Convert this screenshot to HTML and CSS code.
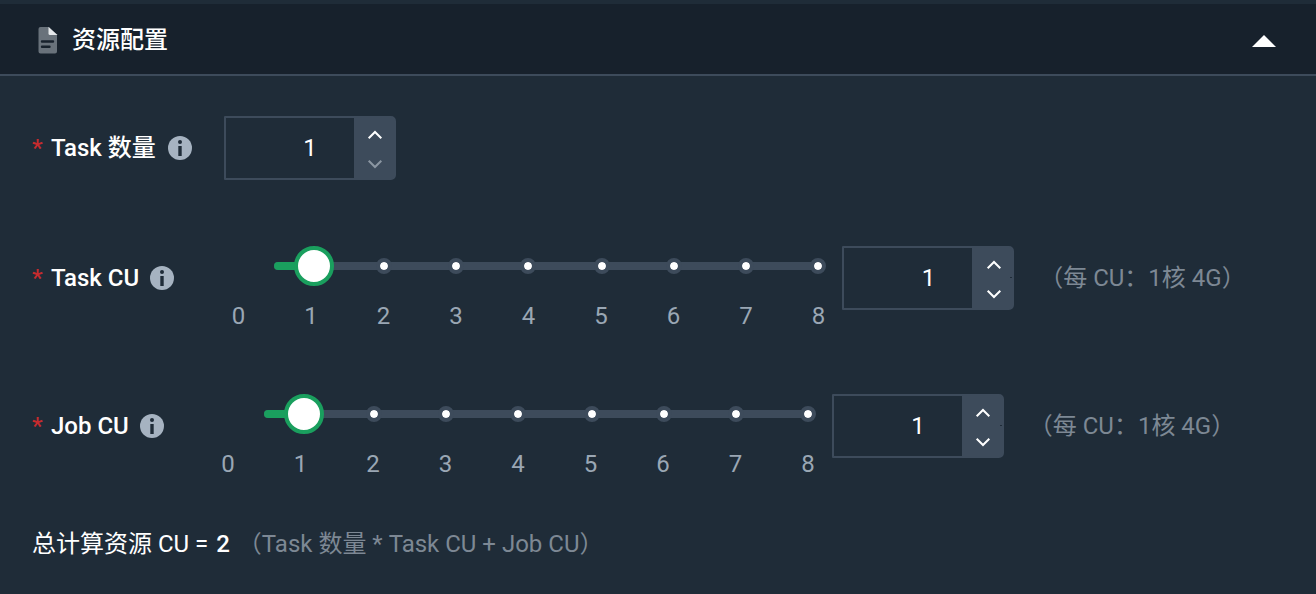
FILE: index.html
```html
<!DOCTYPE html>
<html lang="zh-CN">
<head>
<meta charset="utf-8">
<title>资源配置</title>
<link rel="stylesheet" href="styles.css">
</head>
<body>
<svg class="defs" width="0" height="0">
  <symbol id="info" viewBox="0 0 24 24"><circle cx="12" cy="12" r="12" fill="#a6b3c1"/><circle cx="12" cy="6" r="2" fill="#1f2c38"/><path d="M10.3 10h3.4v10h-3.4z" fill="#1f2c38"/></symbol>
  <symbol id="up" viewBox="0 0 16 10"><path d="M1.7 8.3 8 2l6.300 6.300" fill="none" stroke="currentColor" stroke-width="2"/></symbol>
  <symbol id="down" viewBox="0 0 16 10"><path d="M1.700 1.700 8 8l6.300-6.300" fill="none" stroke="currentColor" stroke-width="2"/></symbol>
</svg>
<header class="header">
  <svg class="doc" viewBox="0 0 20 28"><path d="M2.500 1H11l8 8v16.500a2 2 0 0 1-2 2H2.500a2 2 0 0 1-2-2V3a2 2 0 0 1 2-2z" fill="#69727b"/><path d="M10.500 1v6.500A1.500 1.500 0 0 0 12 9h7.500z" fill="#e6e9ec"/><path d="M4 15.500h11M4 20.700h7.500" stroke="#17212c" stroke-width="2.400" stroke-linecap="round"/></svg>
  <h1 class="title">资源配置</h1>
  <svg class="caret" viewBox="0 0 24 12"><path d="M0 12 12 0l12 12z" fill="#fff"/></svg>
</header>
<main class="body">
  <section class="row row-count">
    <span class="star">*</span><span class="label">Task 数量</span><svg class="info"><use href="#info"/></svg>
    <div class="stepper"><span class="value">1</span><span class="buttons"><svg><use href="#up"/></svg><svg class="disabled"><use href="#down"/></svg></span></div>
  </section>
  <section class="row row-task">
    <span class="star">*</span><span class="label">Task CU</span><svg class="info"><use href="#info"/></svg>
    <div class="slider">
      <div class="track"><i class="fill"></i><i class="tick" style="left:110px"></i><i class="tick" style="left:182px"></i><i class="tick" style="left:254px"></i><i class="tick" style="left:328px"></i><i class="tick" style="left:400px"></i><i class="tick" style="left:472px"></i><i class="tick" style="left:544px"></i><i class="handle"></i></div>
      <div class="marks"><span>0</span><span>1</span><span>2</span><span>3</span><span>4</span><span>5</span><span>6</span><span>7</span><span>8</span></div>
    </div>
    <div class="stepper notched"><span class="value">1</span><span class="buttons"><svg><use href="#up"/></svg><svg><use href="#down"/></svg></span></div>
    <span class="hint">（每 CU：1核 4G）</span>
  </section>
  <section class="row row-job">
    <span class="star">*</span><span class="label">Job CU</span><svg class="info"><use href="#info"/></svg>
    <div class="slider">
      <div class="track"><i class="fill"></i><i class="tick" style="left:110px"></i><i class="tick" style="left:182px"></i><i class="tick" style="left:254px"></i><i class="tick" style="left:328px"></i><i class="tick" style="left:400px"></i><i class="tick" style="left:472px"></i><i class="tick" style="left:544px"></i><i class="handle"></i></div>
      <div class="marks"><span>0</span><span>1</span><span>2</span><span>3</span><span>4</span><span>5</span><span>6</span><span>7</span><span>8</span></div>
    </div>
    <div class="stepper notched"><span class="value">1</span><span class="buttons"><svg><use href="#up"/></svg><svg><use href="#down"/></svg></span></div>
    <span class="hint">（每 CU：1核 4G）</span>
  </section>
  <p class="total"><span>总计算资源 CU = <b>2</b></span><span class="formula">（Task 数量 * Task CU + Job CU）</span></p>
</main>
</body>
</html>
```
FILE: styles.css
```css
* { box-sizing: border-box; }
body {
  margin: 0;
  height: 594px;
  padding-top: 4px;
  overflow: hidden;
  background: #1f2c38;
  color: #fff;
  font: 400 24px/32px Roboto, "Noto Sans CJK SC", sans-serif;
  white-space: nowrap;
}
.defs { position: absolute; }
.header {
  display: flex;
  align-items: center;
  height: 72px;
  padding: 0 40px 0 38px;
  background: #17212c;
  border-bottom: 2px solid #3d4b5b;
}
.doc { width: 20px; height: 28px; margin-top: 1px; }
.title { margin: 2px auto 0 14px; font-size: 24px; font-weight: 500; line-height: 32px; }
.caret { width: 24px; height: 12px; margin-top: 3px; }
.body { padding: 40px 32px 0; }
.row { display: flex; align-items: flex-start; height: 64px; }
.row-count { margin-bottom: 66px; }
.row-task { margin-bottom: 84px; }
.star { width: 11px; margin: 16px 8px 0 0; color: #c62b2e; font-weight: 500; }
.label { margin-top: 16px; font-weight: 500; }
.info { flex: none; width: 24px; height: 24px; margin: 20px 0 0 11px; }
.row-count .info { margin-left: 12px; }
.stepper {
  position: relative;
  display: flex;
  flex: none;
  width: 172px;
  height: 64px;
  border: 2px solid #3d4b5b;
  border-radius: 1px 5px 5px 1px;
}
.row-count .stepper { margin-left: 32px; }
.value { flex: 1; padding: 14px 37px 0 0; text-align: right; line-height: 32px; }
.buttons {
  display: flex;
  flex-direction: column;
  align-items: center;
  justify-content: space-between;
  width: 40px;
  padding: 12px 0 9px 3px;
  background: #3d4b5b;
}
.buttons svg { width: 16px; height: 10px; }
.disabled { color: #8b96a2; }
.notched::after {
  content: "";
  position: absolute;
  top: 29px;
  right: 0;
  width: 2px;
  height: 1px;
  background: #1f2c38;
}
.slider { flex: none; width: 640px; padding: 16px 0 0 28px; }
.track {
  position: relative;
  width: 548px;
  height: 8px;
  margin-left: 72px;
  border-radius: 4px;
  background: #3d4b5b;
}
.fill { display: block; width: 40px; height: 8px; border-radius: 4px; background: #1a9f5e; }
.tick, .handle { position: absolute; border-radius: 50%; background: #fff; }
.tick { top: -4px; width: 16px; height: 16px; margin-left: -8px; border: 4px solid #3d4b5b; background-clip: padding-box; }
.handle { top: -16px; left: 20px; width: 40px; height: 40px; border: 4px solid #1a9f5e; }
.marks {
  display: grid;
  grid-template-columns: repeat(9, 72.5px);
  width: 652.5px;
  margin-top: 30px;
  color: #9aa7b4;
  text-align: center;
}
.row-task .stepper, .row-job .stepper { margin-left: 28px; }
.hint { margin: 16px 0 0 25px; color: #7d8894; }
.total { display: flex; margin: 70px 0 0; }
.total b { margin-left: 2px; font-weight: 500; }
.formula { margin-left: 8px; color: #7d8894; }
```
